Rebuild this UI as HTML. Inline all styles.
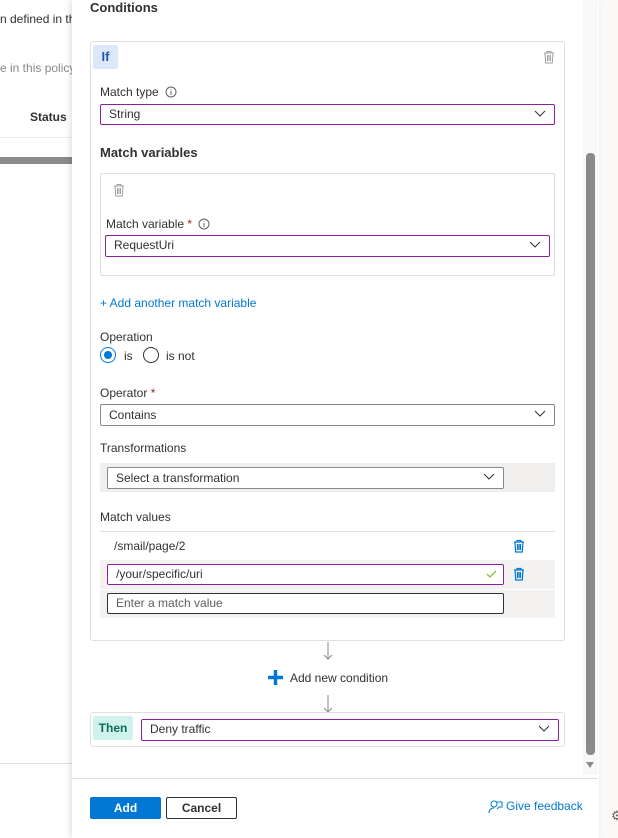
<!DOCTYPE html>
<html><head><meta charset="utf-8"><style>
*{box-sizing:border-box;margin:0;padding:0}
body{width:618px;height:838px;overflow:hidden;background:#fff;font-family:"Liberation Sans",sans-serif;font-size:12px;color:#323130;position:relative}
.a{position:absolute;white-space:nowrap}
.lbl{font-size:12px;color:#323130}
.box{position:absolute;border:1px solid #8a8886;border-radius:2px;background:#fff;padding-left:8px;font-size:12px;line-height:18px}
.pur{border-color:#8a1fa0}
.chev{position:absolute;right:8px;top:3px}
.star{color:#a4262c}
</style></head><body>
<!-- left background page -->
<div class="a" style="left:0;top:12px;color:#323130">n defined in th</div>
<div class="a" style="left:0;top:61px;color:#8a8886">e in this policy</div>
<div class="a" style="left:30px;top:110px;font-weight:bold">Status</div>
<div class="a" style="left:0;top:137px;width:72px;height:1px;background:#edebe9"></div>
<div class="a" style="left:0;top:157px;width:72px;height:7px;background:#8a8a8a"></div>
<div class="a" style="left:0;top:763px;width:72px;height:1px;background:#e1dfdd"></div>
<!-- right strip -->
<div class="a" style="left:598px;top:0;width:20px;height:838px;background:#faf9f8;border-left:1px solid #edebe9"></div>
<div class="a" style="left:611px;top:808px;color:#605e5c;font-size:13px">⚙</div>
<!-- panel -->
<div class="a" style="left:72px;top:0;width:527px;height:838px;background:#fff;box-shadow:-2px 0 6px rgba(0,0,0,.12)"></div>
<div class="a" style="left:583px;top:0;width:15px;height:775px;background:#f8f8f8"></div>
<div class="a" style="left:586px;top:153px;width:9px;height:602px;background:#8a8a8a;border-radius:4px"></div>
<div class="a" style="left:586px;top:762px;width:0;height:0;border-left:4.5px solid transparent;border-right:4.5px solid transparent;border-top:6px solid #8a8a8a"></div>

<div class="a" style="left:90px;top:0;font-size:13px;font-weight:bold;color:#323130">Conditions</div>

<!-- if card -->
<div class="a" style="left:90px;top:41px;width:475px;height:600px;border:1px solid #e1dfdd;border-radius:3px"></div>
<div class="a" style="left:93px;top:45px;width:25px;height:24px;background:#dce8fa;border-radius:2px;color:#1b5aa8;font-weight:bold;text-align:center;line-height:24px;font-size:13px">If</div>
<svg class="a" style="left:543px;top:50px" width="12" height="14" viewBox="0 0 12 14"><path d="M1 3h10M4 3V1.5h4V3M2 3l.7 10h6.6L10 3M4.5 5v6M6 5v6M7.5 5v6" fill="none" stroke="#a19f9d" stroke-width="1"/></svg>

<div class="a lbl" style="left:100px;top:85px">Match type</div>
<svg class="a" style="left:165px;top:86px" width="12" height="12"><circle cx="6" cy="6" r="5" fill="none" stroke="#605e5c"/><path d="M6 5v4M6 3.2v.8" stroke="#605e5c"/></svg>
<div class="box pur" style="left:100px;top:104px;width:455px;height:21px">String<svg class="chev" width="12" height="12"><path d="M1 3l5 5 5-5" fill="none" stroke="#323130"/></svg></div>

<div class="a" style="left:100px;top:145px;font-size:13px;font-weight:bold">Match variables</div>
<div class="a" style="left:100px;top:173px;width:455px;height:103px;border:1px solid #e1dfdd;border-radius:2px"></div>
<svg class="a" style="left:113px;top:183px" width="12" height="14" viewBox="0 0 12 14"><path d="M1 3h10M4 3V1.5h4V3M2 3l.7 10h6.6L10 3M4.5 5v6M6 5v6M7.5 5v6" fill="none" stroke="#a19f9d" stroke-width="1"/></svg>
<div class="a lbl" style="left:106px;top:217px">Match variable <span class="star">*</span></div>
<svg class="a" style="left:198px;top:218px" width="12" height="12"><circle cx="6" cy="6" r="5" fill="none" stroke="#605e5c"/><path d="M6 5v4M6 3.2v.8" stroke="#605e5c"/></svg>
<div class="box pur" style="left:105px;top:235px;width:445px;height:22px;line-height:19px">RequestUri<svg class="chev" width="12" height="12"><path d="M1 3l5 5 5-5" fill="none" stroke="#323130"/></svg></div>

<div class="a" style="left:100px;top:296px;color:#0078d4">+ Add another match variable</div>
<div class="a lbl" style="left:100px;top:330px">Operation</div>
<div class="a" style="left:100px;top:347px;width:16px;height:16px;border:1px solid #0078d4;border-radius:50%"></div>
<div class="a" style="left:104px;top:351px;width:8px;height:8px;background:#0078d4;border-radius:50%"></div>
<div class="a lbl" style="left:124px;top:349px">is</div>
<div class="a" style="left:143px;top:347px;width:16px;height:16px;border:1px solid #323130;border-radius:50%"></div>
<div class="a lbl" style="left:166px;top:349px">is not</div>

<div class="a lbl" style="left:100px;top:386px">Operator <span class="star">*</span></div>
<div class="box" style="left:100px;top:404px;width:455px;height:22px;line-height:20px">Contains<svg class="chev" width="12" height="12"><path d="M1 3l5 5 5-5" fill="none" stroke="#323130"/></svg></div>

<div class="a lbl" style="left:100px;top:441px">Transformations</div>
<div class="a" style="left:100px;top:463px;width:455px;height:29px;background:#f0efee"></div>
<div class="box" style="left:107px;top:467px;width:397px;height:22px;line-height:20px;color:#323130">Select a transformation<svg class="chev" width="12" height="12"><path d="M1 3l5 5 5-5" fill="none" stroke="#323130"/></svg></div>

<div class="a lbl" style="left:100px;top:510px">Match values</div>
<div class="a" style="left:100px;top:531px;width:455px;height:1px;background:#e1dfdd"></div>
<div class="a lbl" style="left:114px;top:539px">/smail/page/2</div>
<svg class="a" style="left:513px;top:539px" width="12" height="14" viewBox="0 0 12 14"><path d="M1 3h10M4 3V1.5h4V3M2 3l.7 10h6.6L10 3M4.5 5v6M6 5v6M7.5 5v6" fill="none" stroke="#0078d4" stroke-width="1.2"/></svg>
<div class="a" style="left:100px;top:560px;width:455px;height:29px;background:#f3f2f1"></div>
<div class="box pur" style="left:107px;top:564px;width:397px;height:21px">/your/specific/uri<svg class="chev" width="12" height="12" style="right:6px"><path d="M2 6l3 3 6-6" fill="none" stroke="#6bb700"/></svg></div>
<svg class="a" style="left:513px;top:567px" width="12" height="14" viewBox="0 0 12 14"><path d="M1 3h10M4 3V1.5h4V3M2 3l.7 10h6.6L10 3M4.5 5v6M6 5v6M7.5 5v6" fill="none" stroke="#0078d4" stroke-width="1.2"/></svg>
<div class="a" style="left:100px;top:590px;width:455px;height:28px;background:#f3f2f1"></div>
<div class="box" style="left:107px;top:593px;width:397px;height:21px;border-color:#323130;color:#605e5c">Enter a match value</div>

<!-- arrows and add -->
<svg class="a" style="left:322px;top:642px" width="12" height="19"><path d="M6 0v17M2 13l4 4 4-4" fill="none" stroke="#8a8886"/></svg>
<svg class="a" style="left:268px;top:670px" width="15" height="15"><path d="M7.5 0v15M0 7.5h15" stroke="#0078d4" stroke-width="3.5"/></svg>
<div class="a" style="left:290px;top:671px;color:#323130">Add new condition</div>
<svg class="a" style="left:322px;top:695px" width="12" height="19"><path d="M6 0v17M2 13l4 4 4-4" fill="none" stroke="#8a8886"/></svg>

<!-- then -->
<div class="a" style="left:90px;top:712px;width:475px;height:35px;border:1px solid #e1dfdd;border-radius:3px"></div>
<div class="a" style="left:93px;top:716px;width:40px;height:24px;background:#cff2ec;border-radius:2px;color:#0b6a5c;font-weight:bold;text-align:center;line-height:24px">Then</div>
<div class="box pur" style="left:141px;top:719px;width:418px;height:22px;line-height:19px">Deny traffic<svg class="chev" width="12" height="12"><path d="M1 3l5 5 5-5" fill="none" stroke="#323130"/></svg></div>

<!-- footer -->
<div class="a" style="left:72px;top:778px;width:526px;height:1px;background:#e1dfdd"></div>
<div class="a" style="left:90px;top:797px;width:71px;height:22px;background:#0078d4;border-radius:2px;color:#fff;font-weight:bold;text-align:center;line-height:22px">Add</div>
<div class="a" style="left:166px;top:797px;width:71px;height:22px;border:1px solid #323130;border-radius:2px;font-weight:bold;text-align:center;line-height:20px">Cancel</div>
<svg class="a" style="left:488px;top:799px" width="15" height="15"><circle cx="6" cy="5" r="3" fill="none" stroke="#0078d4"/><path d="M1 14c0-3 2-5 5-5M8 3h6v5h-3l-2 2" fill="none" stroke="#0078d4"/></svg>
<div class="a" style="left:506px;top:799px;color:#0078d4">Give feedback</div>
</body></html>
